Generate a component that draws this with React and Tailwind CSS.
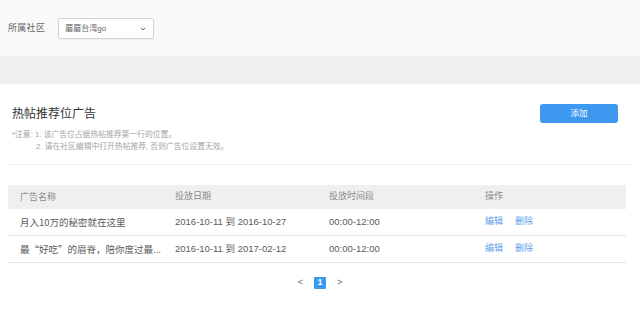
import React from "react";

const rows = [
  { name: "月入10万的秘密就在这里", date: "2016-10-11 到 2016-10-27", time: "00:00-12:00" },
  { name: "最“好吃”的眉脊，陪你度过最...", date: "2016-10-11 到 2017-02-12", time: "00:00-12:00" },
];

function Row({ cols, className }) {
  return (
    <div className={`grid grid-cols-[155px_154px_156px_1fr] items-center ${className}`}>
      {cols.map((c, i) => (
        <div key={i} className={i === 0 ? "pl-3 truncate font-['Noto_Sans_CJK_SC',sans-serif]" : "pl-3"}>
          {c}
        </div>
      ))}
    </div>
  );
}

export default function App() {
  return (
    <div className="w-[640px] h-[331px] overflow-hidden bg-white font-['Liberation_Sans','Noto_Sans_CJK_SC',sans-serif]">
      <div className="h-[56px] bg-[#f9f9f9] rounded-b-[3px] flex items-center pl-2 pt-[1px]">
        <span className="text-[9px] text-[#666] tracking-[0.3px]">所属社区</span>
        <div className="ml-[13px] w-[96px] h-[21px] border border-[#d3d3d3] rounded-[2px] bg-white flex items-center justify-between pl-[6px] pr-[7px] shadow-[0_1px_1px_rgba(0,0,0,0.04)]">
          <span className="text-[8px] text-[#666]">蘑蘑台湾go</span>
          <svg width="6" height="4" viewBox="0 0 6 4" className="text-[#666]">
            <path d="M0.8 0.8 L3 3 L5.2 0.8" fill="none" stroke="currentColor" strokeWidth="1" />
          </svg>
        </div>
      </div>
      <div className="h-[28px] bg-[#efefef]" />
      <div className="bg-white rounded-t-[4px] pt-[20px]">
        <div className="flex items-center justify-between pl-3 pr-[22px]">
          <h2 className="text-[12px] text-[#333] leading-none">热帖推荐位广告</h2>
          <button className="w-[78px] h-[19px] rounded-[3px] bg-[#3d99ef] text-white text-[8.5px]">
            添加
          </button>
        </div>
        <div className="mt-[6px] pl-3 text-[7.8px] leading-[12px] text-[#a5a5a5]">
          <p>*注意: 1. 该广告位占据热帖推荐第一行的位置。</p>
          <p className="pl-[24px]">2. 请在社区编辑中打开热帖推荐, 否则广告位设置无效。</p>
        </div>
        <div className="mt-[11px] mx-2 h-px bg-[#eeeeee]" />
        <div className="mt-[20px] ml-2 w-[618px] text-[9.5px]">
          <Row
            cols={["广告名称", "投放日期", "投放时间段", "操作"]}
            className="h-[24px] bg-[#efefef] text-[#8a8a8a] text-[9px]"
          />
          {rows.map((r) => (
            <Row
              key={r.name}
              cols={[
                r.name,
                r.date,
                r.time,
                <div className="flex gap-[12px] text-[#5c9fea] text-[9px]">
                  <span>编辑</span>
                  <span>删除</span>
                </div>,
              ]}
              className="h-[27px] border-b border-[#e3e3e3] text-[#5a5a5a]"
            />
          ))}
        </div>
        <div className="mt-[13px] flex items-center justify-center gap-[11px] text-[9px] text-[#666]">
          <span>&lt;</span>
          <span className="w-[12px] h-[12px] rounded-[1px] bg-[#3d99ef] text-white flex items-center justify-center font-bold">
            1
          </span>
          <span>&gt;</span>
        </div>
      </div>
    </div>
  );
}
